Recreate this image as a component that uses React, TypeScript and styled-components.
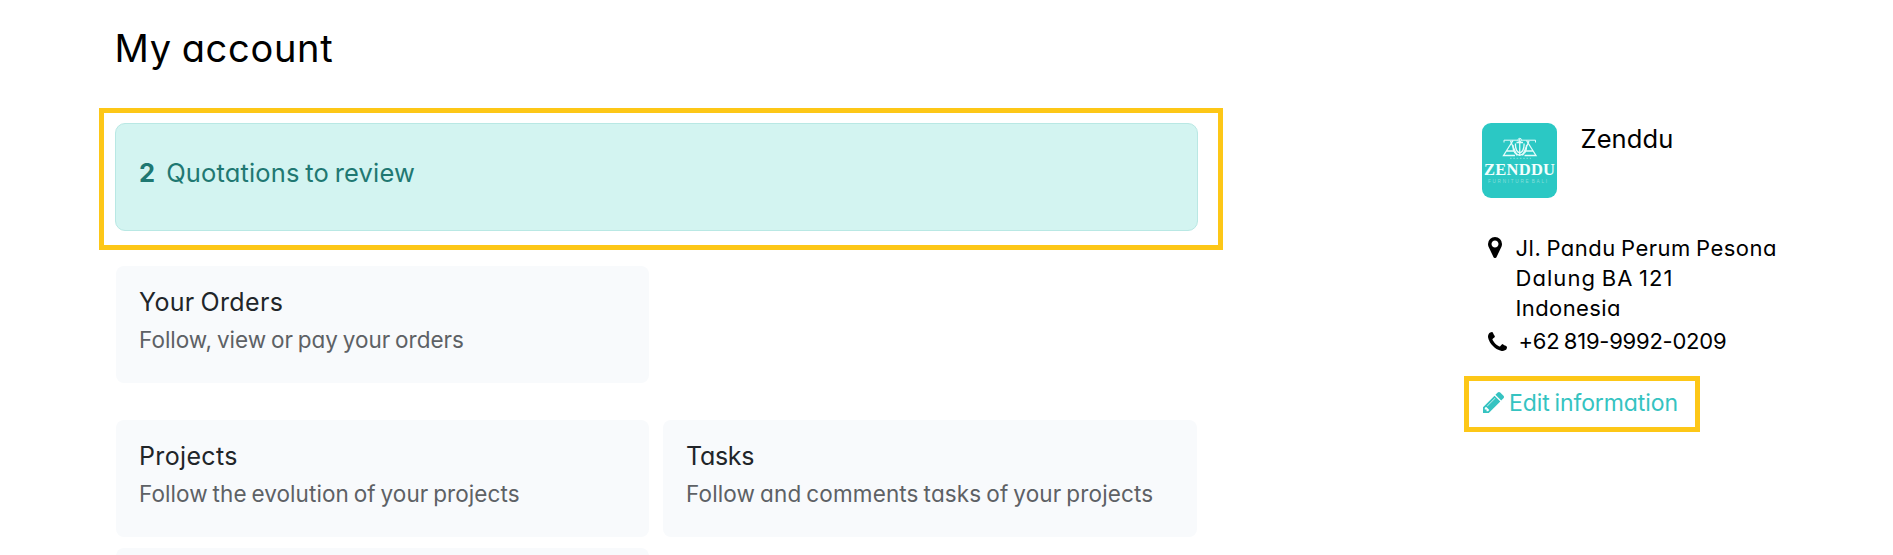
import React from "react";
import styled, { createGlobalStyle } from "styled-components";

const GlobalStyle = createGlobalStyle`
  * { box-sizing: border-box; }
  body {
    margin: 0;
    background: #fff;
    color: #000;
    font-family: Inter, "Open Sans", sans-serif;
    font-weight: 370;
    font-feature-settings: "cv11" 1;
    word-spacing: -1.5px;
    overflow: hidden;
  }
`;

const Page = styled.div`
  display: flex;
  align-items: flex-start;
  height: 555px;
  overflow: hidden;
`;

const Main = styled.main`
  width: 1124px;
  margin-left: 99px;
  padding-top: 25px;
`;

const Title = styled.h1`
  margin: 0 0 37px 15.5px;
  font-size: 38px;
  font-weight: 370;
  line-height: 46px;
  letter-spacing: 0.7px;
`;

const Highlight = styled.div`
  border: 5px solid #fdc717;
`;

const AlertHighlight = styled(Highlight)`
  height: 142px;
  padding: 10px 20px 10px 11px;
`;

const Alert = styled.a`
  display: flex;
  align-items: baseline;
  height: 108px;
  padding: 33px 23px 0;
  gap: 11px;
  border: 1px solid #b9e8e4;
  border-radius: 10px;
  background: #d3f4f1;
  color: #1f7872;
  font-size: 25.5px;
  line-height: 32px;
  letter-spacing: 0.14px;
`;

const Count = styled.strong`
  font-weight: 650;
`;

const Cards = styled.div`
  display: grid;
  grid-template-columns: 533px 534px;
  column-gap: 14px;
  margin: 16px 0 0 17px;
`;

const Card = styled.a<{ $top?: number; $row?: boolean }>`
  height: 117px;
  margin-top: ${(p) => p.$top ?? 0}px;
  grid-column-start: ${(p) => (p.$row ? 1 : "auto")};
  padding: 18px 23px 0;
  border-radius: 8px;
  background: #f8fafc;
`;

const CardTitle = styled.div<{ $ls: number }>`
  color: #212529;
  font-size: 25px;
  line-height: 37px;
  letter-spacing: ${(p) => p.$ls}px;
  white-space: nowrap;
`;

const CardText = styled.div<{ $ls: number }>`
  color: #5d6165;
  font-size: 22.5px;
  line-height: 38px;
  letter-spacing: ${(p) => p.$ls}px;
  white-space: nowrap;
`;

const Aside = styled.aside`
  display: flex;
  flex-direction: column;
  margin: 123px 0 0 241px;
  width: 360px;
`;

const Profile = styled.div`
  display: flex;
  gap: 23.5px;
  margin-left: 18px;
`;

const Name = styled.div`
  font-size: 25.5px;
  line-height: 32px;
  letter-spacing: 0.1px;
`;

const Contact = styled.div<{ $top: number }>`
  display: flex;
  margin: ${(p) => p.$top}px 0 0 24px;
  font-size: 22px;
  line-height: 30.2px;
`;

const IconSlot = styled.span<{ $w: number; $top: number }>`
  display: flex;
  align-items: flex-start;
  width: ${(p) => p.$w}px;
  padding-top: ${(p) => p.$top}px;
`;

const Line = styled.div<{ $ls: number }>`
  letter-spacing: ${(p) => p.$ls}px;
  white-space: nowrap;
`;

const EditHighlight = styled(Highlight)`
  display: flex;
  width: 236px;
  height: 56px;
  margin-top: 20px;
  padding: 7px 0 0 14px;
`;

const EditLink = styled.a`
  display: flex;
  align-items: flex-start;
  gap: 5px;
  color: #35c3c1;
  font-size: 23px;
  line-height: 30px;
  letter-spacing: -0.1px;
  white-space: nowrap;

  svg {
    margin-top: 4px;
  }
`;

const Logo = () => (
  <svg width="75" height="75" viewBox="0 0 75 75">
    <rect width="75" height="75" rx="9" fill="#2bc8c4" />
    <g fill="none" stroke="#e4fbfa" strokeWidth="1.3">
      <path d="M22 19.500V17.200H36M53.500 19.500V17.200H39.500" strokeWidth="1" />
      <path d="M31 17.500L21.500 32.500H33M28.500 18L35 32.500M24.500 28H32" />
      <path d="M44.500 17.500L54 32.500H42.500M47 18L40.500 32.500M51 28H43.500" />
      <path d="M37.750 15.500V32M34.500 19.500H41" />
      <path d="M31 22Q30.500 31 37.750 32.300Q45 31 44.500 22M33.500 20.500Q33 28 37.750 30Q42.500 28 42 20.500" />
      <circle cx="37.750" cy="17" r="1.700" strokeWidth="0.900" />
    </g>
    <path d="M28 35.300H49" stroke="#8fe3e0" strokeWidth="0.900" strokeDasharray="1.600 1.700" />
    <text x="2" y="52" textLength="71" fill="#f2fffe" wordSpacing="0"
      fontFamily="Liberation Serif, serif" fontWeight="700" fontSize="16.500">ZENDDU</text>
    <text x="6" y="60.200" textLength="59" fill="#86deda"
      fontFamily="Liberation Sans, sans-serif" fontSize="4.600">FURNITURE BALI</text>
  </svg>
);

const PinIcon = () => (
  <svg width="14" height="21" viewBox="0 128 1024 1536" fill="currentColor">
    <path d="M768 640q0-106-75-181t-181-75-181 75-75 181 75 181 181 75 181-75 75-181zm256 0q0 109-33 179l-364 774q-16 33-47.500 52t-67.500 19-67.500-19-46.500-52l-365-774q-33-70-33-179 0-212 150-362t362-150 362 150 150 362z" />
  </svg>
);

const PhoneIcon = () => (
  <svg width="19" height="19" viewBox="0 0 1408 1408" fill="currentColor">
    <path d="M1408 1112q0 27-10 70.500t-21 68.500q-21 50-122 106-94 51-186 51-27 0-53-3.500t-57.500-12.500-47-14.500-55.500-20.500-49-18q-98-35-175-83-127-79-264-216t-216-264q-48-77-83-175-3-9-18-49t-20.500-55.500-14.500-47-12.500-57.500-3.500-53q0-92 51-186 56-101 106-122 25-11 68.500-21t70.500-10q14 0 21 3 18 6 53 76 11 19 30 54t35 63.500 31 53.500q3 4 17.500 25t21.500 35.500 7 28.500q0 20-28.500 50t-62 55-62 53-28.500 46q0 9 5 22.500t8.500 20.500 14 24 11.500 19q76 137 174 235t235 174q2 1 19 11.500t24 14 20.500 8.500 22.500 5q18 0 46-28.500t53-62 55-62 50-28.500q14 0 28.500 7t35.500 21.500 25 17.500q25 15 53.500 31t63.500 35 54 30q70 35 76 53 3 7 3 21z" />
  </svg>
);

const PencilIcon = () => (
  <svg width="21" height="21" viewBox="128 149 1515 1515" fill="currentColor">
    <path d="M491 1536l91-91-235-235-91 91v107h128v128h107zm523-928q0-22-22-22-10 0-17 7l-542 542q-7 7-7 17 0 22 22 22 10 0 17-7l542-542q7-7 7-17zm-54-192l416 416-832 832h-416v-416zm683 96q0 53-37 90l-166 166-416-416 166-165q36-38 90-38 53 0 91 38l235 234q37 39 37 91z" />
  </svg>
);

export default function App() {
  return (
    <>
      <GlobalStyle />
      <Page>
        <Main>
          <Title>My account</Title>
          <AlertHighlight>
            <Alert>
              <Count>2</Count>
              <span>Quotations to review</span>
            </Alert>
          </AlertHighlight>
          <Cards>
            <Card>
              <CardTitle $ls={0.35}>Your Orders</CardTitle>
              <CardText $ls={0}>Follow, view or pay your orders</CardText>
            </Card>
            <Card $row $top={37}>
              <CardTitle $ls={0.35}>Projects</CardTitle>
              <CardText $ls={0.07}>Follow the evolution of your projects</CardText>
            </Card>
            <Card $top={37}>
              <CardTitle $ls={-0.3}>Tasks</CardTitle>
              <CardText $ls={0.14}>Follow and comments tasks of your projects</CardText>
            </Card>
            <Card $row $top={11} />
          </Cards>
        </Main>
        <Aside>
          <Profile>
            <Logo />
            <Name>Zenddu</Name>
          </Profile>
          <Contact $top={35}>
            <IconSlot $w={27.5} $top={4}><PinIcon /></IconSlot>
            <div>
              <Line $ls={0.5}>Jl. Pandu Perum Pesona</Line>
              <Line $ls={1.05}>Dalung BA 121</Line>
              <Line $ls={0.4}>Indonesia</Line>
            </div>
          </Contact>
          <Contact $top={2}>
            <IconSlot $w={30.5} $top={6.5}><PhoneIcon /></IconSlot>
            <Line $ls={-0.24}>+62 819-9992-0209</Line>
          </Contact>
          <EditHighlight>
            <EditLink>
              <PencilIcon />
              Edit information
            </EditLink>
          </EditHighlight>
        </Aside>
      </Page>
    </>
  );
}
